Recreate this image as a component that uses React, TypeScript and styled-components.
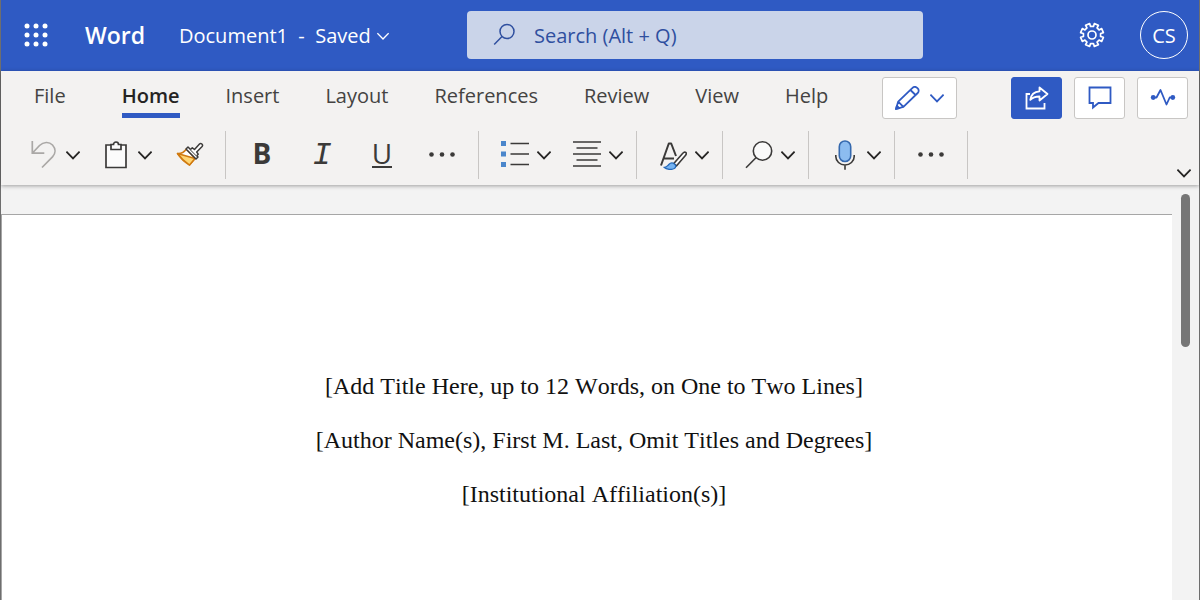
import React from "react";
import styled, { createGlobalStyle, css } from "styled-components";

const blue = "#2f5ac3";
const ink = "#3b3a39";
const sans = `"Open Sans", "Noto Sans", sans-serif`;

const GlobalStyle = createGlobalStyle`
  *, *::before, *::after { box-sizing: border-box; }
  body { margin: 0; background: #f3f2f1; font-family: ${sans}; }
  button, input { font: inherit; }
  svg { display: block; flex: none; }
`;

const Window = styled.div`
  display: flex;
  flex-direction: column;
  min-height: 100vh;
  border: solid #6e6e6e;
  border-width: 0 1px;
`;

const PlainButton = styled.button`
  display: flex;
  align-items: center;
  justify-content: center;
  padding: 0;
  border: 0;
  background: none;
  color: inherit;
  cursor: pointer;
`;

/* ---------- Title bar ---------- */

const TitleBar = styled.header`
  display: flex;
  align-items: center;
  height: 71px;
  padding: 0 11px 1px 23px;
  background: ${blue};
  color: #fff;
`;

const Brand = styled.div`
  width: 97px;
  padding-left: 37px;
  font-size: 23px;
  line-height: 32px;
  font-weight: 600;
`;

const DocumentButton = styled(PlainButton)`
  flex: none;
  width: 210px;
  justify-content: flex-start;
  gap: 6px;
  margin: 0 78px 0 34px;
  padding-top: 2px;
  font-size: 20px;
  line-height: 32px;
  white-space: pre;
`;

const SearchBox = styled.label`
  display: flex;
  flex: 1;
  align-items: center;
  gap: 17px;
  min-width: 200px;
  height: 48px;
  padding: 0 26px;
  border-radius: 4px;
  background: #cad4e9;
  color: #2f4f9f;
`;

const SearchInput = styled.input`
  flex: 1;
  min-width: 0;
  padding: 2px 0 0;
  border: 0;
  outline: 0;
  background: none;
  color: inherit;
  font-size: 20px;
  line-height: 32px;
  &::placeholder { color: inherit; opacity: 1; }
`;

const SettingsButton = styled(PlainButton)`
  margin: 0 35px 0 156px;
`;

const Avatar = styled(PlainButton)`
  flex: none;
  width: 48px;
  height: 48px;
  border: 1px solid #fff;
  border-radius: 50%;
  font-size: 20px;
`;

/* ---------- Ribbon ---------- */

const Ribbon = styled.section`
  position: relative;
  height: 114px;
  background: #f3f2f1;
  color: ${ink};
  box-shadow: 0 1px 4px rgba(0, 0, 0, 0.35);
`;

const TabRow = styled.div`
  display: flex;
  align-items: flex-start;
  height: 60px;
  padding: 6px 11px 0 33px;
`;

const Tabs = styled.nav`
  display: flex;
  gap: 46px;
`;

const Tab = styled(PlainButton)<{ $active?: boolean; $first?: boolean }>`
  height: 41px;
  margin-right: ${(p) => (p.$first ? 10 : 0)}px;
  padding-top: 2px;
  border-bottom: 5px solid ${(p) => (p.$active ? blue : "transparent")};
  color: ${(p) => (p.$active ? "#252423" : "#444342")};
  font-size: 20px;
  line-height: 34px;
  font-weight: ${(p) => (p.$active ? 600 : 400)};
`;

const ActionButton = styled(PlainButton)<{ $primary?: boolean; $wide?: boolean }>`
  flex: none;
  gap: ${(p) => (p.$wide ? 10 : 0)}px;
  width: ${(p) => (p.$wide ? 75 : 51)}px;
  height: 42px;
  border: 1px solid ${(p) => (p.$primary ? blue : "#c8c6c4")};
  border-radius: 3px;
  background: ${(p) => (p.$primary ? blue : "#fff")};
  color: ${(p) => (p.$primary ? "#fff" : blue)};
`;

const ModeSlot = styled.div`
  padding-left: 54px;
`;

const Actions = styled.div`
  display: flex;
  gap: 12px;
  margin-left: auto;
`;

const ToolRow = styled.div`
  display: flex;
  height: 54px;
  padding: 0 7px;
`;

const Group = styled.div<{ $split?: boolean }>`
  display: flex;
  align-items: stretch;
  height: 48px;
  padding: ${(p) => (p.$split ? "0 2px 0 11px" : "0 6px")};
  border-right: 1px solid #c8c6c4;
`;

const Tool = styled(PlainButton)<{ $width?: number }>`
  flex: none;
  gap: 8px;
  width: ${(p) => p.$width ?? 60}px;
`;

const PainterTool = styled(Tool)`
  justify-content: flex-start;
  padding-left: 13px;
`;

const letter = css`
  height: 36px;
  font-size: 28px;
  line-height: 32px;
`;

const BoldLetter = styled.span`
  ${letter}
  font-weight: 700;
`;

const ItalicLetter = styled.span`
  ${letter}
  font-family: "Liberation Mono", monospace;
  font-style: italic;
  font-size: 32px;
  line-height: 38px;
`;

const UnderlineLetter = styled.span`
  ${letter}
  height: 26px;
  line-height: 22px;
  border-bottom: 2px solid ${ink};
`;

const CollapseButton = styled(PlainButton)`
  align-self: flex-end;
  margin-left: auto;
  width: 16px;
  height: 24px;
`;

/* ---------- Document ---------- */

const Workspace = styled.main`
  display: flex;
  flex: 1;
  background: #f3f3f3;
`;

const Paper = styled.article`
  flex: 1;
  margin-top: 29px;
  padding: 144px 0 50px 14px;
  border: solid #a6a6a6;
  border-width: 1px 0 0 1px;
  background: #fff;
  color: #111;
  font-family: "Liberation Serif", serif;
  font-size: 24px;
  font-kerning: none;
  line-height: 54px;
  text-align: center;
`;

const Line = styled.p`
  margin: 0;
`;

const ScrollTrack = styled.div`
  width: 27px;
  padding: 9px 9px 0;
`;

const ScrollThumb = styled.div`
  height: 153px;
  border-radius: 5px;
  background: #767676;
`;

/* ---------- Icons ---------- */

const Chevron = ({ size = 14, color = "#252423", width = 1.8 }: { size?: number; color?: string; width?: number }) => (
  <svg width={size} height={size} viewBox="0 0 14 14" fill="none" stroke={color} strokeWidth={width}>
    <path d="M.4 3.700 7 10.500l6.600-6.800" />
  </svg>
);

const Waffle = () => (
  <svg width="24" height="24" viewBox="0 0 24 24" fill="currentColor">
    {[3, 12, 21].map((y) => [3, 12, 21].map((x) => <circle key={`${x}-${y}`} cx={x} cy={y} r="2.500" />))}
  </svg>
);

const SearchGlyph = () => (
  <svg width="24" height="24" viewBox="0 0 24 24" fill="none" stroke="currentColor" strokeWidth="1.500">
    <circle cx="14" cy="8.500" r="7" />
    <path d="M9 13.500 1.200 21.500" />
  </svg>
);

const toothPoint = (radius: number, degrees: number) => {
  const a = (degrees * Math.PI) / 180;
  return `${(13 + radius * Math.cos(a)).toFixed(2)} ${(13 + radius * Math.sin(a)).toFixed(2)}`;
};
const gearPath =
  Array.from({ length: 8 }, (_, i) => {
    const c = 22.5 + i * 45;
    return [
      [8.7, c - 13],
      [11.6, c - 11],
      [11.6, c + 11],
      [8.7, c + 13],
    ]
      .map(([r, a], k) => `${i === 0 && k === 0 ? "M" : "L"}${toothPoint(r, a)}`)
      .join("");
  }).join("") + "Z";

const Gear = () => (
  <svg width="26" height="26" viewBox="0 0 26 26" fill="none" stroke="currentColor" strokeWidth="1.700" strokeLinejoin="round">
    <path d={gearPath} />
    <circle cx="13" cy="13" r="4" />
  </svg>
);

const Pencil = () => (
  <svg width="25" height="24" viewBox="0 0 25 24" fill="none" stroke="currentColor" strokeWidth="1.800" strokeLinejoin="round">
    <path d="M1 23 3.200 15.600 17.500 1.800a3.200 3.200 0 0 1 4.600 0l.6.600a3.200 3.200 0 0 1 0 4.600L8.400 20.800ZM3.200 15.600l5.200 5.200M15.400 4l5.200 5" />
    <path d="m1 23 .9-3.200 2.500 2.300Z" fill="currentColor" />
  </svg>
);

const Share = () => (
  <svg width="24" height="24" viewBox="0 0 24 24" fill="none" stroke="currentColor" strokeWidth="1.800">
    <path d="M5 8H1.500v14.500h18V17" />
    <path d="M14.500 1.500 22.500 8l-8 6.500v-4c-4 0-6.800.8-9.200 3.400C6 8.500 9 5.600 14.500 5.300Z" strokeLinejoin="round" />
  </svg>
);

const Comment = () => (
  <svg width="24" height="24" viewBox="0 0 24 24" fill="none" stroke="currentColor" strokeWidth="1.800">
    <path d="M1.500 1.500h21V17H10.500L5 21.500V17H1.500Z" />
  </svg>
);

const Activity = () => (
  <svg width="26" height="24" viewBox="0 0 26 24" fill="none" stroke="currentColor" strokeWidth="1.800">
    <path d="M3 11.500h3.500l4-7.500L16.500 18.500l3.200-7H23" strokeLinejoin="round" />
    <circle cx="3.200" cy="11.500" r="2.400" fill="currentColor" stroke="none" />
    <circle cx="22.800" cy="11.500" r="2.400" fill="currentColor" stroke="none" />
  </svg>
);

const Undo = () => (
  <svg width="28" height="28" viewBox="0 0 28 28" fill="none" stroke="#aaa8a6" strokeWidth="1.700">
    <path d="M2.300 0v12.200h12M2.500 12 9.500 4.500C13.500.8 19 .4 22.500 4c3.300 3.600 3.300 8.300 0 11.800L12 26.500" />
  </svg>
);

const Clipboard = () => (
  <svg width="28" height="28" viewBox="0 0 28 28" fill="#fbfbfb" stroke={ink} strokeWidth="1.700">
    <path d="M4 4h20v22.500H4Z" />
    <path d="M9 8.500V3.500h2.500a2.500 2.500 0 0 1 5 0H19v5Z" />
  </svg>
);

const FormatBrush = () => (
  <svg width="28" height="28" viewBox="0 0 28 28" fill="none" strokeWidth="1.500" strokeLinejoin="round">
    <path d="M1.500 12.500c4 .4 6.500-1.200 9-4.500l8.500 9.500-5.500 6.500C8.500 21 4.500 17 1.500 12.500Z" fill="#fff" stroke="#d07a10" />
    <path d="M1.500 12.500 19 17.500 13.500 24C9 21 5 17.500 1.500 12.500Z" fill="#ffd673" stroke="#d07a10" />
    <path d="m12 6 10 10-2 2L10 8Z" fill="#fff" stroke={ink} />
    <path d="m14.500 8.500 1.800-1.700 2.200 1.700 5-5.500c1.500-1.500 4 .8 2.600 2.500L20.700 11l1.500 2.200-1.500 1.500" fill="#fff" stroke={ink} />
  </svg>
);

const Dots = () => (
  <svg width="28" height="6" viewBox="0 0 28 6" fill={ink}>
    <circle cx="3.500" cy="2.500" r="2.300" />
    <circle cx="14" cy="2.500" r="2.300" />
    <circle cx="24.500" cy="2.500" r="2.300" />
  </svg>
);

const Bullets = () => (
  <svg width="28" height="28" viewBox="0 0 28 28">
    <path d="M0 0h5v5H0zM0 10.500h5v5H0zM0 21h5v5H0z" fill="#4a86cb" />
    <path d="M9.500 2.500h18.500M9.500 13h18.500M9.500 23.500h18.500" stroke={ink} strokeWidth="1.700" />
  </svg>
);

const AlignCenter = () => (
  <svg width="28" height="28" viewBox="0 0 28 28" stroke={ink} strokeWidth="1.700">
    <path d="M0 1h28M3.500 7h21M0 13h28M3.500 19h21M0 25h28" />
  </svg>
);

const Styles = () => (
  <svg width="28" height="30" viewBox="0 0 28 30" fill="none" strokeLinejoin="round">
    <path d="M2 25.500 9.800 3.500h2.400L17 16M5 18.500h10" stroke={ink} strokeWidth="2" />
    <path d="M26.800 12.500c-.9-.8-2.200-.2-3 .8L14.800 23.500l2.600 2.400 9-10.500c.8-.9 1.300-2.200.4-2.900Z" fill="#fff" stroke={ink} strokeWidth="1.600" />
    <path d="M5 27.300c3 .2 3.300-1.200 4.800-2.800 1.600-1.700 4-1.900 5.700-.5 1.800 1.500 1.500 3.500-.2 4.500-2.800 1.500-7.600 1.200-10.300-1.200Z" fill="#76b4f2" stroke="#2468b8" strokeWidth="1.300" />
  </svg>
);

const Find = () => (
  <svg width="28" height="28" viewBox="0 0 28 28" fill="none" stroke={ink} strokeWidth="1.600">
    <circle cx="17.500" cy="10" r="9.200" fill="#fafafa" />
    <path d="M11.200 16.500 1 26.700" />
  </svg>
);

const Microphone = () => (
  <svg width="28" height="30" viewBox="0 0 28 30" fill="none" strokeWidth="1.600">
    <rect x="8.300" y="1" width="11.400" height="20.500" rx="5.700" fill="#8cbcf0" stroke="#3569ae" />
    <path d="M4.800 15v1.500a9.200 8.500 0 0 0 18.400 0V15M14 25v4.800" stroke={ink} />
  </svg>
);

/* ---------- App ---------- */

const tabs = ["File", "Home", "Insert", "Layout", "References", "Review", "View", "Help"];

const SplitTool = ({ label, children }: { label: string; children: React.ReactNode }) => (
  <Tool $width={72} aria-label={label}>
    {children}
    <Chevron />
  </Tool>
);

export default function App() {
  return (
    <>
      <GlobalStyle />
      <Window>
        <TitleBar>
          <PlainButton aria-label="App launcher">
            <Waffle />
          </PlainButton>
          <Brand>Word</Brand>
          <DocumentButton>
            {"Document1  -  Saved"}
            <Chevron size={12} color="#fff" width={1.6} />
          </DocumentButton>
          <SearchBox>
            <SearchGlyph />
            <SearchInput type="text" aria-label="Search" placeholder="Search (Alt + Q)" />
          </SearchBox>
          <SettingsButton aria-label="Settings">
            <Gear />
          </SettingsButton>
          <Avatar aria-label="Account">CS</Avatar>
        </TitleBar>

        <Ribbon>
          <TabRow>
            <Tabs>
              {tabs.map((name) => (
                <Tab key={name} $first={name === "File"} $active={name === "Home"}>
                  {name}
                </Tab>
              ))}
            </Tabs>
            <ModeSlot>
              <ActionButton $wide aria-label="Editing mode">
                <Pencil />
                <Chevron color={blue} />
              </ActionButton>
            </ModeSlot>
            <Actions>
              <ActionButton $primary aria-label="Share">
                <Share />
              </ActionButton>
              <ActionButton aria-label="Comments">
                <Comment />
              </ActionButton>
              <ActionButton aria-label="Activity">
                <Activity />
              </ActionButton>
            </Actions>
          </TabRow>

          <ToolRow>
            <Group $split>
              <SplitTool label="Undo"><Undo /></SplitTool>
              <SplitTool label="Paste"><Clipboard /></SplitTool>
              <PainterTool aria-label="Format painter"><FormatBrush /></PainterTool>
            </Group>
            <Group>
              <Tool aria-label="Bold"><BoldLetter>B</BoldLetter></Tool>
              <Tool aria-label="Italic"><ItalicLetter>I</ItalicLetter></Tool>
              <Tool aria-label="Underline"><UnderlineLetter>U</UnderlineLetter></Tool>
              <Tool aria-label="More font options"><Dots /></Tool>
            </Group>
            <Group $split>
              <SplitTool label="Bullets"><Bullets /></SplitTool>
              <SplitTool label="Alignment"><AlignCenter /></SplitTool>
            </Group>
            <Group $split>
              <SplitTool label="Styles"><Styles /></SplitTool>
            </Group>
            <Group $split>
              <SplitTool label="Find"><Find /></SplitTool>
            </Group>
            <Group $split>
              <SplitTool label="Dictate"><Microphone /></SplitTool>
            </Group>
            <Group>
              <Tool aria-label="More options"><Dots /></Tool>
            </Group>
            <CollapseButton aria-label="Ribbon display options">
              <Chevron />
            </CollapseButton>
          </ToolRow>
        </Ribbon>

        <Workspace>
          <Paper>
            <Line>[Add Title Here, up to 12 Words, on One to Two Lines]</Line>
            <Line>[Author Name(s), First M. Last, Omit Titles and Degrees]</Line>
            <Line>[Institutional Affiliation(s)]</Line>
          </Paper>
          <ScrollTrack>
            <ScrollThumb />
          </ScrollTrack>
        </Workspace>
      </Window>
    </>
  );
}
